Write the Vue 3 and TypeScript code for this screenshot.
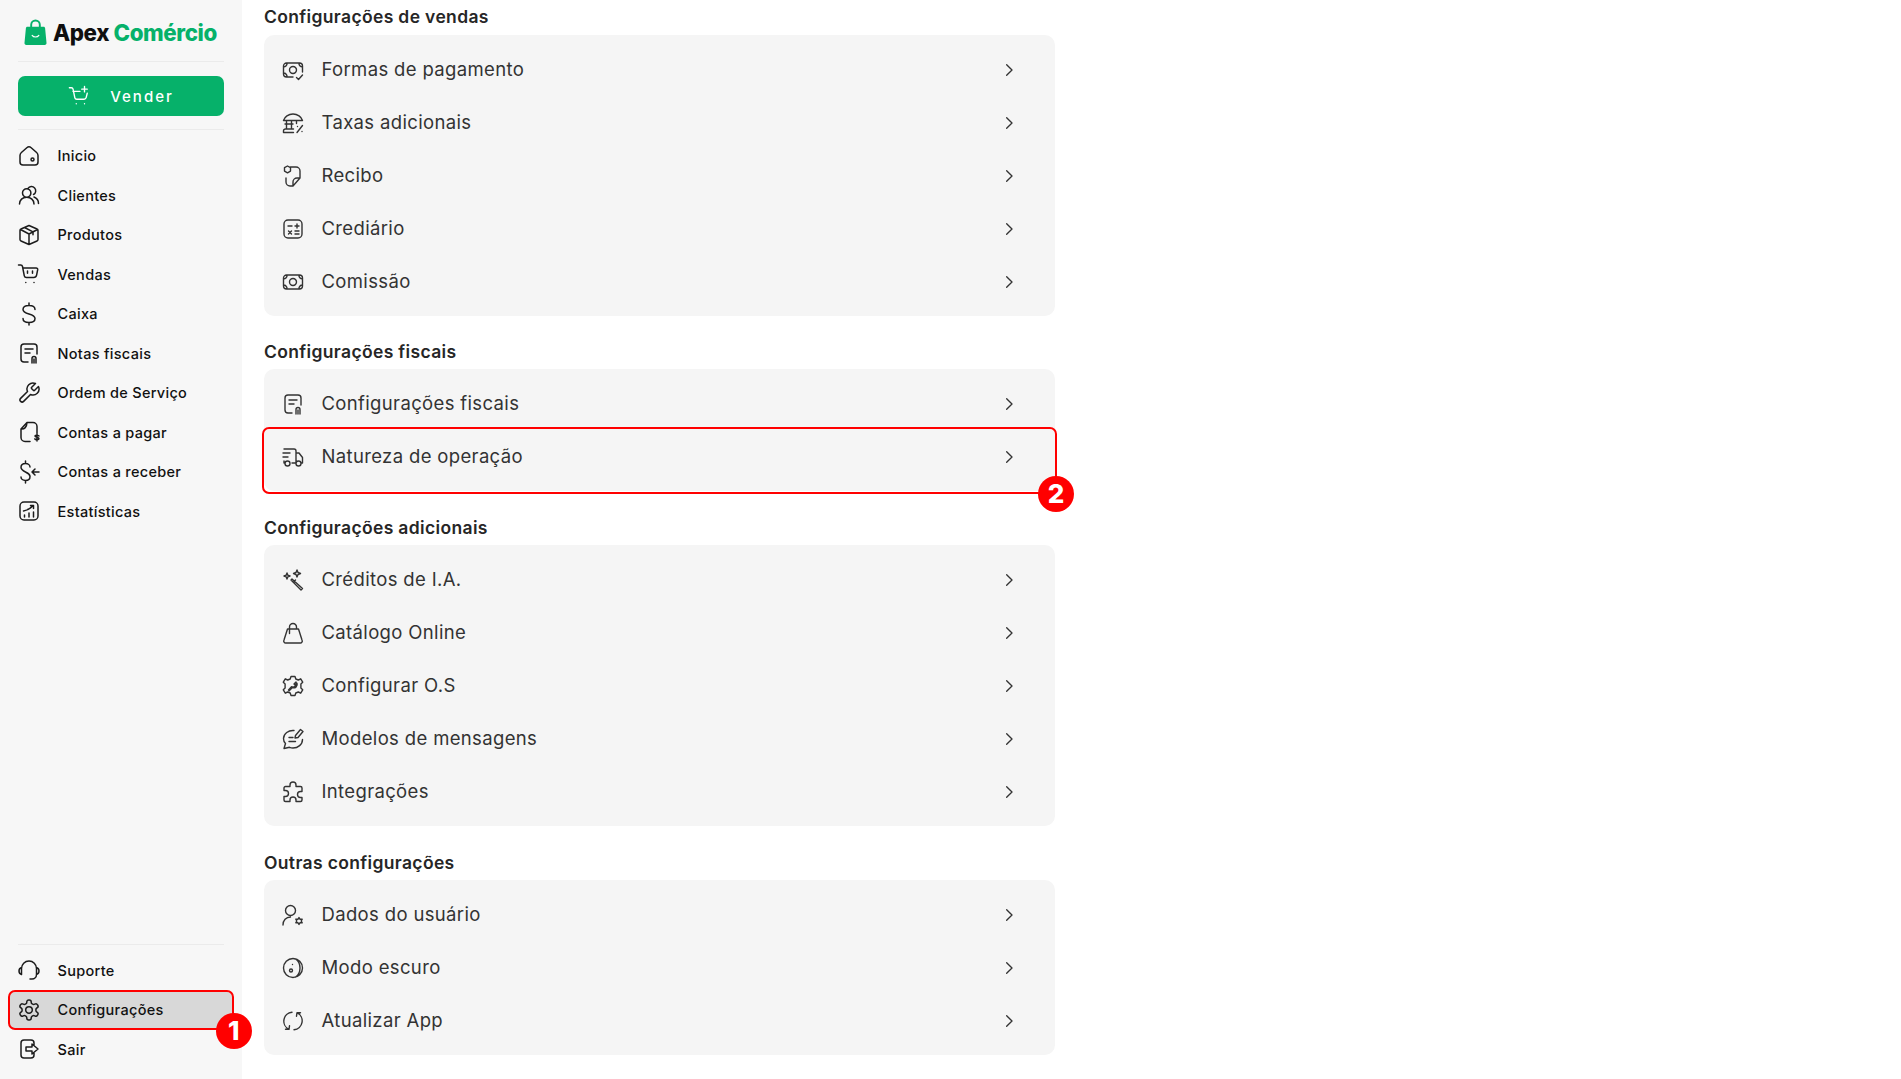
<script setup lang="ts">
const icons: Record<string, string> = {
  home: 'M3 11.500c0-1.200.5-2.200 1.400-3l5.400-4.800a3.400 3.400 0 0 1 4.400 0l5.400 4.800c.9.8 1.400 1.800 1.400 3V18a3 3 0 0 1-3 3H6a3 3 0 0 1-3-3z M14 15.500a1.500 1.500 0 1 0 3 0a1.500 1.500 0 1 0-3 0z',
  users: 'M5.500 10a4.200 4.200 0 1 0 8.400 0a4.200 4.200 0 1 0-8.400 0z M2.500 21c0-4 3-6.800 7.200-6.800S17 17 17 21 M11 5.500a4.200 4.200 0 1 1 5.500 6 M17 14c2.600 1 4.500 3.500 4.500 6.500',
  box: 'M12 2.500l8 3.500a1.500 1.500 0 0 1 1 1.400v9.200a1.500 1.500 0 0 1-1 1.400l-8 3.500-8-3.500a1.500 1.500 0 0 1-1-1.400V7.400a1.500 1.500 0 0 1 1-1.400z M3.500 6.500L12 11l8.500-4.500 M12 11v10.500 M7.500 4.500l8.500 4.300v3',
  cart: 'M1.500 3h2.200c.9 0 1.600.6 1.800 1.500l1.800 9.300a2.200 2.200 0 0 0 2.200 1.700h7.200a3 3 0 0 0 2.900-2.400l1.100-5.400a1.500 1.500 0 0 0-1.500-1.700H5.800 M10.500 9v2.200 M15.500 9v2.200 M8.800 20.500h.01 M17 20.500h.01',
  dollar: 'M18 7.500C18 5 15.500 3.500 12 3.500S6 5 6 7.500 8.500 11 12 12s6 2 6 4.500-2.500 4-6 4-6-1.500-6-4 M12 1v2.500 M12 20.500V23',
  note: 'M11 21H7a3 3 0 0 1-3-3V6a3 3 0 0 1 3-3h10a3 3 0 0 1 3 3v7 M8 8h8 M8 12h5 M15 22v-4.500a2 2 0 0 1 4 0V22 M17 22v-4',
  wrench: 'M14.700 6.300a1 1 0 0 0 0 1.400l1.600 1.600a1 1 0 0 0 1.400 0l3.770-3.770a6 6 0 0 1-7.940 7.940l-6.910 6.910a2.120 2.120 0 0 1-3-3l6.910-6.910a6 6 0 0 1 7.940-7.940l-3.760 3.760z',
  bill: 'M13 21.500H8a4 4 0 0 1-4-4V9l6-6.500h6a4 4 0 0 1 4 4V13 M4 9c3.500.5 5.800-2 6-6.500 M22 16c-.3-1-3.700-1.200-4-.1-.4 1.500 4.300 1.300 4 3-.2 1.100-3.700 1.100-4.200 0 M20 13.500v7.500',
  dollarIn: 'M13 7c0-2-2-3.500-4.500-3.500S4 5 4 7.300 6 10.800 8.500 12s4.500 2 4.500 4.500-2 4-4.500 4S4 19 4 17 M8.500 1v2.500 M8.500 20.500V23 M22 12h-6.500 M18 9l-3 3 3 3',
  stats: 'M7 3h10a4 4 0 0 1 4 4v10a4 4 0 0 1-4 4H7a4 4 0 0 1-4-4V7a4 4 0 0 1 4-4z M6.500 12c3.500-.5 7-2.500 9.500-5.500 M13.500 6.500H16.500V9.500 M7.500 18v-2 M12 18v-4 M16.500 18v-5',
  headset: 'M4.500 12V10.500a7.500 7.500 0 0 1 15 0V12 M4.500 9.500C3 10 2 11.500 2 13s1 3 2.500 3.500z M19.500 9.500c1.500.5 2.500 2 2.500 3.500s-1 3-2.500 3.500z M19.500 16.500c0 2.500-2 4.500-4.500 4.500h-2',
  gear: 'M12.220 2h-.440a2 2 0 0 0-2 2v.180a2 2 0 0 1-1 1.730l-.430.250a2 2 0 0 1-2 0l-.150-.080a2 2 0 0 0-2.730.730l-.220.380a2 2 0 0 0 .730 2.730l.150.100a2 2 0 0 1 1 1.720v.510a2 2 0 0 1-1 1.740l-.150.090a2 2 0 0 0-.730 2.730l.220.380a2 2 0 0 0 2.730.730l.150-.080a2 2 0 0 1 2 0l.430.250a2 2 0 0 1 1 1.730V20a2 2 0 0 0 2 2h.440a2 2 0 0 0 2-2v-.180a2 2 0 0 1 1-1.730l.430-.250a2 2 0 0 1 2 0l.150.080a2 2 0 0 0 2.730-.730l.220-.390a2 2 0 0 0-.730-2.730l-.150-.080a2 2 0 0 1-1-1.740v-.500a2 2 0 0 1 1-1.740l.150-.090a2 2 0 0 0 .730-2.730l-.220-.380a2 2 0 0 0-2.730-.730l-.150.080a2 2 0 0 1-2 0l-.430-.250a2 2 0 0 1-1-1.730V4a2 2 0 0 0-2-2z M8.700 12a3.300 3.300 0 1 0 6.600 0a3.300 3.300 0 1 0-6.600 0z',
  exit: 'M17 8V6a3 3 0 0 0-3-3H7a3 3 0 0 0-3 3v12a3 3 0 0 0 3 3h7a3 3 0 0 0 3-3v-2 M9 10h6V7l6 5-6 5v-3H9z',
  pay: 'M12 19H5.500a3 3 0 0 1-3-3V8a3 3 0 0 1 3-3h13a3 3 0 0 1 3 3v6 M2.500 9a3.500 3.500 0 0 0 3.500-4 M21.500 9a3.500 3.500 0 0 1-3.500-4 M2.500 15a3.500 3.500 0 0 1 3.500 4 M8.500 12a3.500 3.500 0 1 0 7 0a3.500 3.500 0 1 0-7 0z M15.500 19.500l2 2 4-4.500',
  bank: 'M2.500 9.500c1-3.500 5-6.500 9.500-6.500s8.500 3 9.500 6.500z M5.500 9.500V18 M10.500 9.500V18 M15.500 9.500v3 M2.500 21.500v-1.500a2 2 0 0 1 2-2h8 M2.500 21.500h10 M4 13h8 M21.500 14.500l-5.500 7 M16.500 15.500h.01 M21 20.500h.01',
  receipt: 'M9.500 3H15a4 4 0 0 1 4 4v7l-7 8H9a4 4 0 0 1-4-4v-4 M19 14h-3a4 4 0 0 0-4 4v4 M6.500 2l3 1.700v3.400l-3 1.700-3-1.700V3.700z',
  calc: 'M7 3h10a4 4 0 0 1 4 4v10a4 4 0 0 1-4 4H7a4 4 0 0 1-4-4V7a4 4 0 0 1 4-4z M7 9h4 M14 9h4 M16 7v4 M7.500 14l3 3 M10.500 14l-3 3 M14 14h4 M14 17h4',
  money: 'M5.500 5h13a3 3 0 0 1 3 3v8a3 3 0 0 1-3 3h-13a3 3 0 0 1-3-3V8a3 3 0 0 1 3-3z M2.500 9a3.500 3.500 0 0 0 3.500-4 M21.500 9a3.500 3.500 0 0 1-3.500-4 M2.500 15a3.500 3.500 0 0 1 3.500 4 M21.500 15a3.500 3.500 0 0 0-3.500 4 M8.500 12a3.500 3.500 0 1 0 7 0a3.500 3.500 0 1 0-7 0z',
  truck: 'M3 4h10a2 2 0 0 1 2 2v12h-4 M2 8h7 M2 12h5 M3 16v2h1 M15 8h3l3.500 4.500V18h-1 M9 18.500a2.500 2.500 0 1 1-5 0a2.500 2.500 0 1 1 5 0z M20 18.500a2.500 2.500 0 1 1-5 0a2.500 2.500 0 1 1 5 0z',
  wand: 'M11 11l10.500 9.500-1.500 1.500-10-10z M12.500 14l2-2 M6 5l.8 2.200L9 8l-2.200.8L6 11l-.8-2.200L3 8l2.200-.8z M16 2l1 2.500L19.500 5.500 17 6.500 16 9l-1-2.500-2.500-1 2.500-1z',
  bag: 'M6.500 8h11l3.500 11a2 2 0 0 1-2 3H5a2 2 0 0 1-2-3z M8.500 12.500V6a3.500 3.500 0 0 1 7 0v2',
  cog: 'M10 2.500h4l.8 2.500 2.500 1 2.400-1.200 2 3.400-1.800 1.800v4l1.800 1.800-2 3.400-2.400-1.200-2.500 1-.8 2.500h-4l-.8-2.500-2.500-1-2.400 1.200-2-3.400 1.800-1.800v-4L2.300 8.200l2-3.400 2.400 1.200 2.500-1z M15 8a3.500 3.500 0 0 1-4.500 4.700L7.500 16l.7.700 3.200-3.100A3.500 3.500 0 0 0 16 9.200L14 11l-1-1z',
  chat: 'M13 3.500C7.500 3 2.500 6.500 2.500 11.500c0 2 .8 3.800 2 5L3 21.500l5.500-1.200c1 .4 2.200.7 3.500.7 5 0 9.500-3.500 9.500-8.500 M8 10.500h4 M8 14.500h6.500 M14.500 8.500l5-6 2.500 2-5 6-3 .5z',
  puzzle: 'M9 5a3 3 0 0 1 6 0v1.500h4.500a1.500 1.500 0 0 1 1.500 1.500v3.500h-1.500a3 3 0 0 0 0 6H21V20a1.500 1.500 0 0 1-1.500 1.500H15V20a3 3 0 0 0-6 0v1.500H4.500A1.500 1.500 0 0 1 3 20v-3.500h1.500a3 3 0 0 0 0-6H3V8a1.500 1.500 0 0 1 1.500-1.500H9z',
  userCog: 'M4.500 7.500a5 5 0 1 0 10 0a5 5 0 1 0-10 0z M2 22c0-4.500 3-8 7.500-8 M18 14.500l1.100 1.800 2.100-.1-1 1.800 1 1.800-2.100-.1L18 21.500l-1.100-1.800-2.100.1 1-1.800-1-1.800 2.100.1z',
  moon: 'M2.500 12a9.500 9.500 0 1 0 19 0a9.500 9.500 0 1 0-19 0z M14.500 2.900c3 2 4.500 5.500 4.500 9.100s-1.500 7-4.500 9.100 M8.500 14.500a1.500 1.500 0 1 0 3 0a1.500 1.500 0 1 0-3 0z M11.500 8.500v.01',
  sync: 'M11 3.200A9 9 0 0 0 8 20.300 M13 20.800A9 9 0 0 0 16 3.700 M16 3.700l-.5 3.500 M16 3.700h3.500 M8 20.300l.5-3.500 M8 20.300H4.500',
}

const mainNav = [
  { label: 'Inicio', icon: 'home' }, { label: 'Clientes', icon: 'users' }, { label: 'Produtos', icon: 'box' },
  { label: 'Vendas', icon: 'cart' }, { label: 'Caixa', icon: 'dollar' }, { label: 'Notas fiscais', icon: 'note' },
  { label: 'Ordem de Serviço', icon: 'wrench' }, { label: 'Contas a pagar', icon: 'bill' },
  { label: 'Contas a receber', icon: 'dollarIn' }, { label: 'Estatísticas', icon: 'stats' },
]

const sections = [
  { title: 'Configurações de vendas', items: [
    { label: 'Formas de pagamento', icon: 'pay' }, { label: 'Taxas adicionais', icon: 'bank' },
    { label: 'Recibo', icon: 'receipt' }, { label: 'Crediário', icon: 'calc' }, { label: 'Comissão', icon: 'money' } ] },
  { title: 'Configurações fiscais', items: [
    { label: 'Configurações fiscais', icon: 'note' }, { label: 'Natureza de operação', icon: 'truck', mark: true } ] },
  { title: 'Configurações adicionais', items: [
    { label: 'Créditos de I.A.', icon: 'wand' }, { label: 'Catálogo Online', icon: 'bag' },
    { label: 'Configurar O.S', icon: 'cog' }, { label: 'Modelos de mensagens', icon: 'chat' }, { label: 'Integrações', icon: 'puzzle' } ] },
  { title: 'Outras configurações', items: [
    { label: 'Dados do usuário', icon: 'userCog' }, { label: 'Modo escuro', icon: 'moon' }, { label: 'Atualizar App', icon: 'sync' } ] },
]
</script>

<template>
  <div class="page">
    <aside class="sidebar">
      <div class="logo">
        <svg class="bag" viewBox="0 0 24 28">
          <path d="M7.500 9V6a4.500 4.500 0 0 1 9 0v3" fill="none" stroke="#06b16a" stroke-width="2" />
          <path d="M3.500 8h17c.8 0 1.400.6 1.500 1.400l1.500 15.500c.1 1-.7 2.100-1.800 2.100H2.300C1.200 27 .4 25.900.5 24.900L2 9.400C2.100 8.600 2.700 8 3.500 8z" fill="#06b16a" />
          <path d="M8.500 17c1.500 2.300 5.500 2.300 7 0" fill="none" stroke="#fff" stroke-width="1.200" stroke-linecap="round" />
        </svg>
        <span class="brand">Apex <em>Comércio</em></span>
      </div>
      <button class="sell">
        <svg viewBox="0 0 24 24" class="sell-ico">
          <path d="M1.500 3h2.300c.9 0 1.500.6 1.700 1.500l2 9.500c.2 1 1 1.500 2 1.500h8c1.200 0 2-.7 2.300-1.800L21 9 M5.500 7H13 M9 20.500h.01 M18 20.500h.01 M18 1.500v6 M15 4.500h6" />
        </svg>
        <span>Vender</span>
      </button>
      <nav class="nav">
        <a v-for="n in mainNav" :key="n.label" class="nav-item">
          <svg viewBox="0 0 24 24" class="nav-ico"><path :d="icons[n.icon]" /></svg>
          <span>{{ n.label }}</span>
        </a>
      </nav>
      <nav class="nav bottom">
        <a class="nav-item">
          <svg viewBox="0 0 24 24" class="nav-ico"><path :d="icons.headset" /></svg>
          <span>Suporte</span>
        </a>
        <a class="nav-item marked">
          <svg viewBox="0 0 24 24" class="nav-ico"><path :d="icons.gear" /></svg>
          <span>Configurações</span>
          <i class="badge one">1</i>
        </a>
        <a class="nav-item">
          <svg viewBox="0 0 24 24" class="nav-ico"><path :d="icons.exit" /></svg>
          <span>Sair</span>
        </a>
      </nav>
    </aside>
    <main class="content">
      <section v-for="s in sections" :key="s.title" class="group">
        <h2>{{ s.title }}</h2>
        <div class="card">
          <div v-for="it in s.items" :key="it.label" class="row" :class="{ flagged: it.mark }">
            <svg viewBox="0 0 24 24" class="row-ico"><path :d="icons[it.icon]" /></svg>
            <span class="row-label">{{ it.label }}</span>
            <svg viewBox="0 0 24 24" class="chev"><path d="M8.500 4l8 8-8 8" /></svg>
            <i v-if="it.mark" class="badge two">2</i>
          </div>
        </div>
      </section>
    </main>
  </div>
</template>

<style>
html, body { margin: 0; background: #fff; overflow: hidden; }
</style>

<style scoped>
.page {
  display: flex;
  height: 1079px;
  font-family: Inter, "Liberation Sans", sans-serif;
  color: #222;
}
.sidebar {
  width: 242px;
  flex: none;
  box-sizing: border-box;
  background: #f7f7f7;
  padding: 0 18px;
  display: flex;
  flex-direction: column;
}
.logo {
  height: 62px;
  box-sizing: border-box;
  display: flex;
  align-items: center;
  gap: 6px;
  padding: 4px 0 0 6px;
  border-bottom: 1px solid #ebebeb;
}
.bag { width: 23px; height: 27px; flex: none; }
.brand { font-size: 22.300px; font-weight: 800; color: #0f0f0f; letter-spacing: -0.400px; white-space: nowrap; }
.brand em { font-style: normal; color: #06b16a; }
.sell {
  margin-top: 14px;
  height: 40px;
  border: 0;
  border-radius: 7px;
  background: #06b16a;
  color: #fff;
  display: flex;
  align-items: center;
  justify-content: center;
  gap: 20px;
  padding: 0;
  font: 500 15px Inter, sans-serif;
  letter-spacing: 2px;
}
.sell-ico { width: 22px; height: 22px; fill: none; stroke: #fff; stroke-width: 1.500; stroke-linecap: round; stroke-linejoin: round; }
.nav {
  margin-top: 13px;
  padding-top: 6px;
  border-top: 1px solid #ebebeb;
  display: flex;
  flex-direction: column;
}
.nav.bottom { margin-top: auto; margin-bottom: 10px; padding-top: 6px; }
.nav-item {
  position: relative;
  height: 39.500px;
  display: flex;
  align-items: center;
  gap: 16.500px;
  font-size: 14.500px;
  font-weight: 450;
  letter-spacing: 0.300px;
  color: #111;
}
.nav-ico { width: 24px; height: 24px; margin-left: -1px; flex: none; fill: none; stroke: #1c1c1c; stroke-width: 1.500; stroke-linecap: round; stroke-linejoin: round; }
.marked::before {
  content: "";
  position: absolute;
  left: -10px;
  right: -10px;
  top: 0;
  bottom: 0;
  background: #d8d8d8;
  border: 2px solid #f00;
  border-radius: 7px;
  box-sizing: border-box;
}
.marked > svg, .marked > span { position: relative; }
.badge {
  position: absolute;
  width: 36px;
  height: 36px;
  border-radius: 50%;
  background: #f00;
  color: #fff;
  font: 800 26px/36px Inter, sans-serif;
  text-align: center;
  z-index: 2;
}
.badge.one { right: -28px; bottom: -19px; }
.badge.two { right: -19px; bottom: -29px; }
.content {
  flex: 1;
  padding: 7px 0 0 22px;
}
.group { width: 791px; margin-bottom: 27px; }
.group:first-child { margin-bottom: 26px; }
.group:first-child h2 { margin-bottom: 8px; }
h2 {
  margin: 0 0 7px;
  height: 20px;
  line-height: 20px;
  font-size: 17.500px;
  font-weight: 600;
  color: #262626;
  letter-spacing: 0.350px;
}
.card {
  background: #f5f5f5;
  border-radius: 10px;
  padding: 8px 0;
}
.row {
  position: relative;
  height: 53px;
  display: flex;
  align-items: center;
  padding: 0 38px 0 17px;
}
.row-ico { width: 24px; height: 24px; flex: none; fill: none; stroke: #333; stroke-width: 1.400; stroke-linecap: round; stroke-linejoin: round; }
.row-label {
  margin-left: 16.500px;
  padding-bottom: 1px;
  flex: 1;
  font-size: 18.500px;
  font-weight: 400;
  color: #333;
  letter-spacing: 0.350px;
}
.chev { width: 16px; height: 16px; fill: none; stroke: #333; stroke-width: 2; stroke-linecap: round; stroke-linejoin: round; }
.flagged::after {
  content: "";
  position: absolute;
  left: -2px;
  right: -2px;
  top: -3px;
  bottom: -11px;
  border: 2px solid #f00;
  border-radius: 7px;
}
</style>
